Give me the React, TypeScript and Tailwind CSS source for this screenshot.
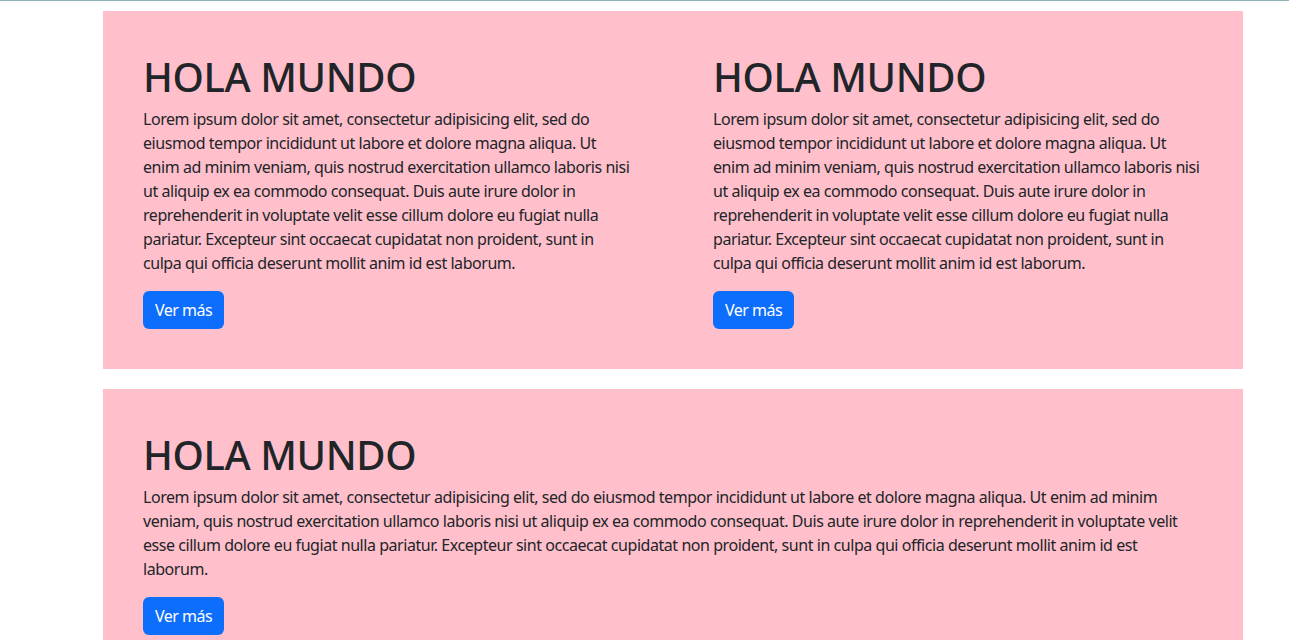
const lorem =
  'Lorem ipsum dolor sit amet, consectetur adipisicing elit, sed do eiusmod tempor incididunt ut labore et dolore magna aliqua. Ut enim ad minim veniam, quis nostrud exercitation ullamco laboris nisi ut aliquip ex ea commodo consequat. Duis aute irure dolor in reprehenderit in voluptate velit esse cillum dolore eu fugiat nulla pariatur. Excepteur sint occaecat cupidatat non proident, sunt in culpa qui officia deserunt mollit anim id est laborum.';

function Bloque() {
  return (
    <div className="p-10">
      <h1 className="mb-2 pt-[2px] h-[48px] text-[40px] font-medium leading-[1.2] tracking-[-0.4px] text-[#212529]">
        HOLA MUNDO
      </h1>
      <p className="mb-4 text-base leading-6 tracking-[-0.45px] text-[#212529]">{lorem}</p>
      <button className="flex h-[38px] items-center rounded-[6px] bg-[#0d6efd] px-3 text-base leading-6 tracking-[-0.5px] text-white">
        Ver más
      </button>
    </div>
  );
}

export default function App() {
  return (
    <div
      className="min-h-screen border-t border-[#8fb4b8] bg-white"
      style={{ fontFamily: '"Noto Sans", "Open Sans", sans-serif' }}
    >
      <div className="ml-[103px] mt-[10px] flex w-[1140px] flex-col gap-5">
        {/* Fila de dos columnas */}
        <div className="grid grid-cols-2 bg-[#ffc0cb]">
          <Bloque />
          <Bloque />
        </div>

        {/* Fila completa */}
        <div className="bg-[#ffc0cb]">
          <Bloque />
        </div>
      </div>
    </div>
  );
}
